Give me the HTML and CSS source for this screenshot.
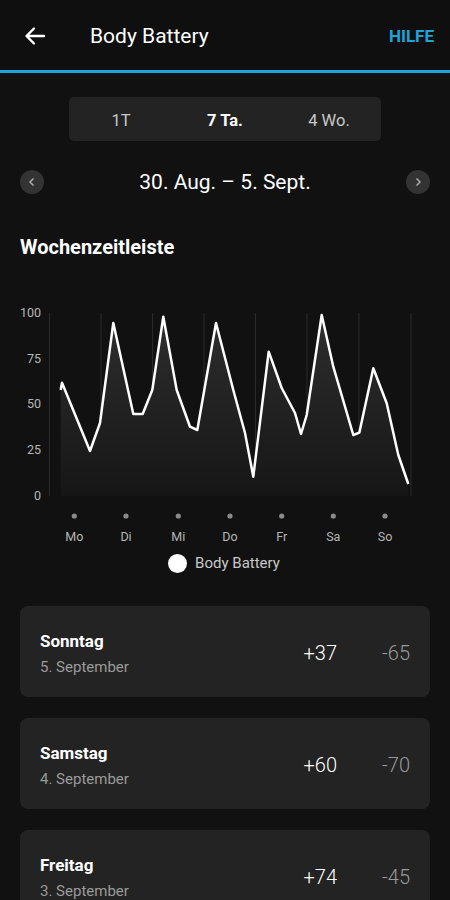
FILE: index.html
```html
<!DOCTYPE html>
<html lang="de">
<head>
    <meta charset="UTF-8">
    <meta name="viewport" content="width=device-width, initial-scale=1.0">
    <title>Body Battery</title>
    <link rel="stylesheet" href="styles.css">
</head>
<body>

<header class="topbar">
    <svg class="back" width="24" height="24" viewBox="0 0 24 24">
        <path d="M21 12H4M11 4.5L3.5 12L11 19.5" fill="none" stroke="#fff" stroke-width="2.4" stroke-linecap="round" stroke-linejoin="round"/>
    </svg>
    <h1 class="title">Body Battery</h1>
    <span class="help">HILFE</span>
</header>

<div class="tabs">
    <span class="tab">1T</span>
    <span class="tab active">7 Ta.</span>
    <span class="tab">4 Wo.</span>
</div>

<div class="daterow">
    <span class="navbtn">
        <svg width="10" height="10" viewBox="0 0 10 10"><path d="M6.5 1.5L3 5L6.5 8.5" fill="none" stroke="#aaa" stroke-width="1.5"/></svg>
    </span>
    <span class="range">30. Aug. – 5. Sept.</span>
    <span class="navbtn">
        <svg width="10" height="10" viewBox="0 0 10 10"><path d="M3.5 1.5L7 5L3.5 8.5" fill="none" stroke="#aaa" stroke-width="1.5"/></svg>
    </span>
</div>

<h2 class="section">Wochenzeitleiste</h2>

<svg class="chart" width="410" height="250" viewBox="0 0 410 250">
    <defs>
        <linearGradient id="fade" x1="0" y1="0" x2="0" y2="1">
            <stop offset="0" stop-color="#2e2e2e"/>
            <stop offset="1" stop-color="#161616"/>
        </linearGradient>
    </defs>
    <g class="ylab" text-anchor="end">
        <text x="21" y="17">100</text>
        <text x="21" y="63">75</text>
        <text x="21" y="108">50</text>
        <text x="21" y="154">25</text>
        <text x="21" y="200">0</text>
    </g>
    <g stroke="#2a2a2a" stroke-width="1">
        <line x1="29.5" y1="13" x2="29.5" y2="196"/>
        <line x1="81" y1="13" x2="81" y2="196"/>
        <line x1="132.5" y1="13" x2="132.5" y2="196"/>
        <line x1="184" y1="13" x2="184" y2="196"/>
        <line x1="235.5" y1="13" x2="235.5" y2="196"/>
        <line x1="287" y1="13" x2="287" y2="196"/>
        <line x1="339" y1="13" x2="339" y2="196"/>
        <line x1="391" y1="13" x2="391" y2="196"/>
    </g>
    <polygon fill="url(#fade)" points="40.7,196 40.7,90 42,82.7 70,151 80,123 93.3,23 113.3,114 122.7,114 132.3,90 143.3,16.7 156.7,90 170,126.7 177.3,130 196,23 213.3,90 225,133 233.3,176.7 248.7,51.7 261.7,88 275,113 281,134 286.7,115 301.7,15 313.3,66.7 333.3,135 339.3,132.7 353.3,68.3 366.7,103.3 378.3,155 388.3,184 388.3,196"/>
    <polyline fill="none" stroke="#fff" stroke-width="2.5" stroke-linejoin="round" points="40.7,90 42,82.7 70,151 80,123 93.3,23 113.3,114 122.7,114 132.3,90 143.3,16.7 156.7,90 170,126.7 177.3,130 196,23 213.3,90 225,133 233.3,176.7 248.7,51.7 261.7,88 275,113 281,134 286.7,115 301.7,15 313.3,66.7 333.3,135 339.3,132.7 353.3,68.3 366.7,103.3 378.3,155 388.3,184"/>
    <g fill="#8a8a8a">
        <circle cx="54.3" cy="216" r="2.6"/>
        <circle cx="106" cy="216" r="2.6"/>
        <circle cx="158.3" cy="216" r="2.6"/>
        <circle cx="210" cy="216" r="2.6"/>
        <circle cx="261.7" cy="216" r="2.6"/>
        <circle cx="313.3" cy="216" r="2.6"/>
        <circle cx="365" cy="216" r="2.6"/>
    </g>
    <g class="xlab" text-anchor="middle">
        <text x="54.3" y="241">Mo</text>
        <text x="106" y="241">Di</text>
        <text x="158.3" y="241">Mi</text>
        <text x="210" y="241">Do</text>
        <text x="261.7" y="241">Fr</text>
        <text x="313.3" y="241">Sa</text>
        <text x="365" y="241">So</text>
    </g>
</svg>

<div class="legend">
    <span class="legend-dot"></span>
    <span>Body Battery</span>
</div>

<div class="days">
    <div class="card">
        <div class="day">
            <div class="day-name">Sonntag</div>
            <div class="day-date">5. September</div>
        </div>
        <span class="val">+37</span>
        <span class="val minus">-65</span>
    </div>
    <div class="card">
        <div class="day">
            <div class="day-name">Samstag</div>
            <div class="day-date">4. September</div>
        </div>
        <span class="val">+60</span>
        <span class="val minus">-70</span>
    </div>
    <div class="card">
        <div class="day">
            <div class="day-name">Freitag</div>
            <div class="day-date">3. September</div>
        </div>
        <span class="val">+74</span>
        <span class="val minus">-45</span>
    </div>
</div>

</body>
</html>
```

FILE: styles.css
```css
body {
    margin: 0;
    background-color: #111;
    color: #fff;
    font-family: Roboto, "Noto Sans", sans-serif;
    overflow: hidden;
}
.topbar {
    height: 70px;
    display: flex;
    align-items: center;
    padding: 0 16px 0 23px;
    border-bottom: 3px solid #1ea3d8;
    background-color: #0f0f0f;
}
.back {
    flex: none;
    margin-top: 1px;
}
.title {
    flex: 1;
    margin: 2px 0 0 43px;
    font-size: 21px;
    font-weight: 400;
}
.help {
    color: #1ea3d8;
    font-size: 17px;
    font-weight: 700;
    margin-top: 1px;
}
.tabs {
    width: 312px;
    height: 44px;
    margin: 24px auto 0;
    display: flex;
    background-color: #232323;
    border-radius: 5px;
}
.tab {
    flex: 1;
    display: flex;
    align-items: center;
    justify-content: center;
    font-size: 16.5px;
    color: #c8c8c8;
    padding-top: 2px;
}
.tab.active {
    color: #fff;
    font-weight: 700;
}
.daterow {
    display: flex;
    align-items: center;
    justify-content: space-between;
    margin: 29px 20px 0;
    height: 24px;
}
.navbtn {
    width: 24px;
    height: 24px;
    border-radius: 50%;
    background-color: #333;
    display: flex;
    align-items: center;
    justify-content: center;
}
.range {
    font-size: 21px;
    line-height: 24px;
}
.section {
    margin: 41px 20px 0;
    font-size: 20px;
    font-weight: 700;
    line-height: 24px;
}
.chart {
    display: block;
    margin: 41px 0 0 20px;
}
.ylab text, .xlab text {
    font-size: 12.5px;
    fill: #b5b5b5;
}
.legend {
    height: 20px;
    margin-top: 3px;
    display: flex;
    align-items: center;
    justify-content: center;
    gap: 8px;
    font-size: 15px;
    color: #c8c8c8;
    padding-right: 2px;
}
.legend-dot {
    width: 19px;
    height: 19px;
    border-radius: 50%;
    background-color: #fff;
}
.days {
    margin: 33px 20px 0;
    display: flex;
    flex-direction: column;
    gap: 21px;
}
.card {
    height: 91px;
    flex: none;
    display: flex;
    align-items: center;
    padding: 0 20px;
    background-color: #232323;
    border-radius: 8px;
}
.day {
    flex: 1;
    margin-top: 5px;
}
.day-name {
    font-size: 17px;
    font-weight: 700;
    line-height: 20px;
}
.day-date {
    margin-top: 6px;
    font-size: 15px;
    line-height: 20px;
    color: #9a9a9a;
}
.val {
    width: 73px;
    text-align: right;
    font-size: 20px;
    font-weight: 300;
    padding-top: 3px;
}
.val.minus {
    color: #9a9a9a;
}
```
